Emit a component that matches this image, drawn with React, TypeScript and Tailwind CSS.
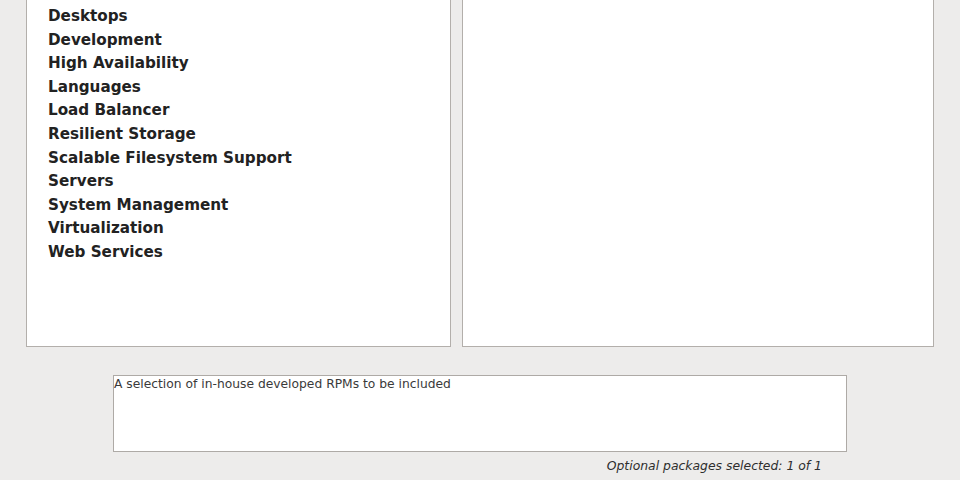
import React from "react";

const groups = [
  "Desktops",
  "Development",
  "High Availability",
  "Languages",
  "Load Balancer",
  "Resilient Storage",
  "Scalable Filesystem Support",
  "Servers",
  "System Management",
  "Virtualization",
  "Web Services",
];

export default function App() {
  return (
    <div
      className="w-[960px] h-[480px] overflow-hidden bg-[#edeceb] flex flex-col"
      style={{ fontFamily: '"DejaVu Sans", sans-serif' }}
    >
      <div className="flex pl-[26px] gap-[11px]">
        <div className="w-[425px] h-[347px] bg-white border-l border-r border-b border-[#b3afab]">
          <ul className="pt-[5px] pl-[21px]">
            {groups.map((g) => (
              <li key={g} className="text-[15.2px] font-bold leading-[23.6px] text-[#222222]">
                {g}
              </li>
            ))}
          </ul>
        </div>
        <div className="w-[472px] h-[347px] bg-white border-l border-r border-b border-[#b3afab]" />
      </div>
      <div className="pl-[113px] pt-[28px]">
        <div className="w-[734px] h-[77px] bg-white border border-[#aeaaa6] pt-px">
          <p className="text-[12.3px] leading-[15px] text-[#3a3a3a]">
            A selection of in-house developed RPMs to be included
          </p>
        </div>
        <div className="w-[734px] flex justify-end pr-[25px] pt-[6px]">
          <span className="text-[12.4px] italic leading-[16px] text-[#2e2e2e]">
            Optional packages selected: 1 of 1
          </span>
        </div>
      </div>
    </div>
  );
}
